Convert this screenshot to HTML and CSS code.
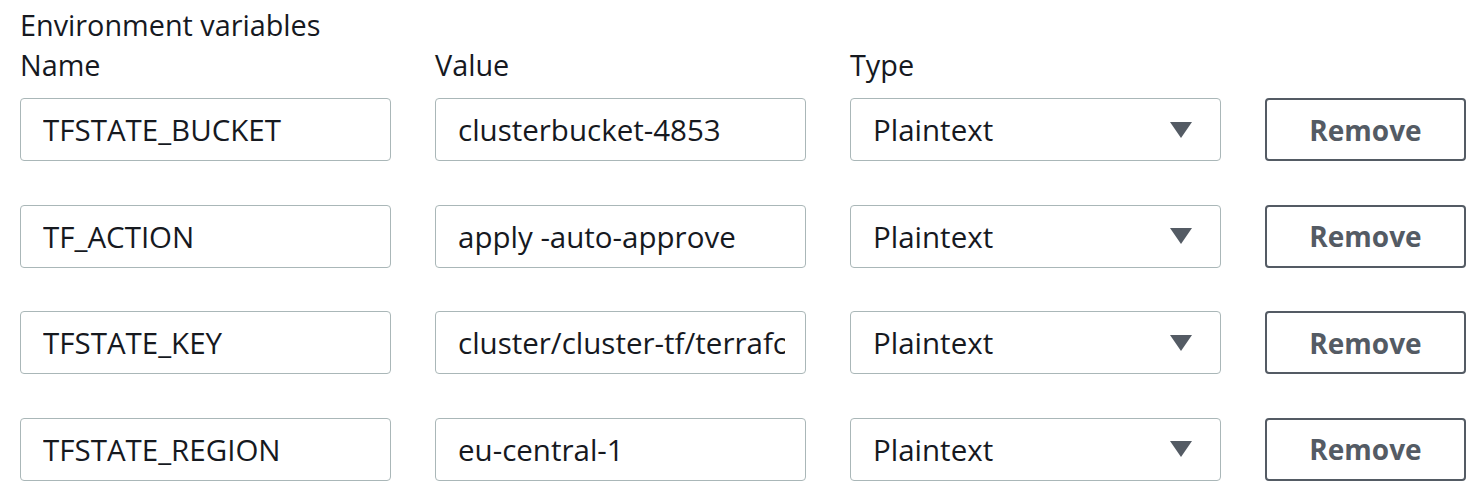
FILE: index.html
```html
<!DOCTYPE html>
<html>
<head>
<meta charset="utf-8">
<link rel="stylesheet" href="styles.css">
</head>
<body>
<div class="env">
  <div class="title">Environment variables</div>
  <div class="head">
    <div class="col-label">Name</div>
    <div class="col-label">Value</div>
    <div class="col-label">Type</div>
  </div>
  <div class="rows">
    <div class="row">
      <div class="field"><span class="val">TFSTATE_BUCKET</span></div>
      <div class="field"><span class="val">clusterbucket-4853</span></div>
      <div class="field select"><span>Plaintext</span><svg class="caret" width="22" height="16" viewBox="0 0 22 16"><polygon points="0,0 22,0 11,16" /></svg></div>
      <div class="btn">Remove</div>
    </div>
    <div class="row">
      <div class="field"><span class="val">TF_ACTION</span></div>
      <div class="field"><span class="val">apply -auto-approve</span></div>
      <div class="field select"><span>Plaintext</span><svg class="caret" width="22" height="16" viewBox="0 0 22 16"><polygon points="0,0 22,0 11,16" /></svg></div>
      <div class="btn">Remove</div>
    </div>
    <div class="row">
      <div class="field"><span class="val">TFSTATE_KEY</span></div>
      <div class="field"><span class="val">cluster/cluster-tf/terraform.tfstate</span></div>
      <div class="field select"><span>Plaintext</span><svg class="caret" width="22" height="16" viewBox="0 0 22 16"><polygon points="0,0 22,0 11,16" /></svg></div>
      <div class="btn">Remove</div>
    </div>
    <div class="row">
      <div class="field"><span class="val">TFSTATE_REGION</span></div>
      <div class="field"><span class="val">eu-central-1</span></div>
      <div class="field select"><span>Plaintext</span><svg class="caret" width="22" height="16" viewBox="0 0 22 16"><polygon points="0,0 22,0 11,16" /></svg></div>
      <div class="btn">Remove</div>
    </div>
  </div>
</div>
</body>
</html>
```
FILE: styles.css
```css
html, body {
  margin: 0;
  padding: 0;
  background: #ffffff;
}
body {
  font-family: "Open Sans", "Noto Sans", sans-serif;
  color: #16191f;
}
.env {
  padding: 8px 0 0 20px;
}
.title {
  font-size: 28.8px;
  line-height: 34px;
}
.head {
  display: grid;
  grid-template-columns: 371px 371px 371px;
  column-gap: 44px;
  margin-top: 6px;
}
.col-label {
  font-size: 28.8px;
  line-height: 34px;
}
.rows {
  margin-top: 16px;
  display: flex;
  flex-direction: column;
  gap: 43.5px;
}
.row {
  display: grid;
  grid-template-columns: 371px 371px 371px 201px;
  column-gap: 44px;
  height: 63px;
}
.field {
  box-sizing: border-box;
  height: 63px;
  border: 1.5px solid #aab7b8;
  border-radius: 4px;
  padding: 0 20px 0 22px;
  font-size: 29.5px;
  display: flex;
  align-items: center;
  white-space: nowrap;
}
.val {
  display: block;
  overflow: hidden;
  white-space: nowrap;
  min-width: 0;
  flex: 1 1 auto;
}
.select {
  justify-content: space-between;
  padding-right: 28px;
}
.caret {
  fill: #545b64;
  flex: none;
}
.btn {
  box-sizing: border-box;
  height: 63px;
  border: 2px solid #545b64;
  border-radius: 4px;
  font-size: 28px;
  font-weight: 700;
  color: #545b64;
  display: flex;
  align-items: center;
  justify-content: center;
}
```
